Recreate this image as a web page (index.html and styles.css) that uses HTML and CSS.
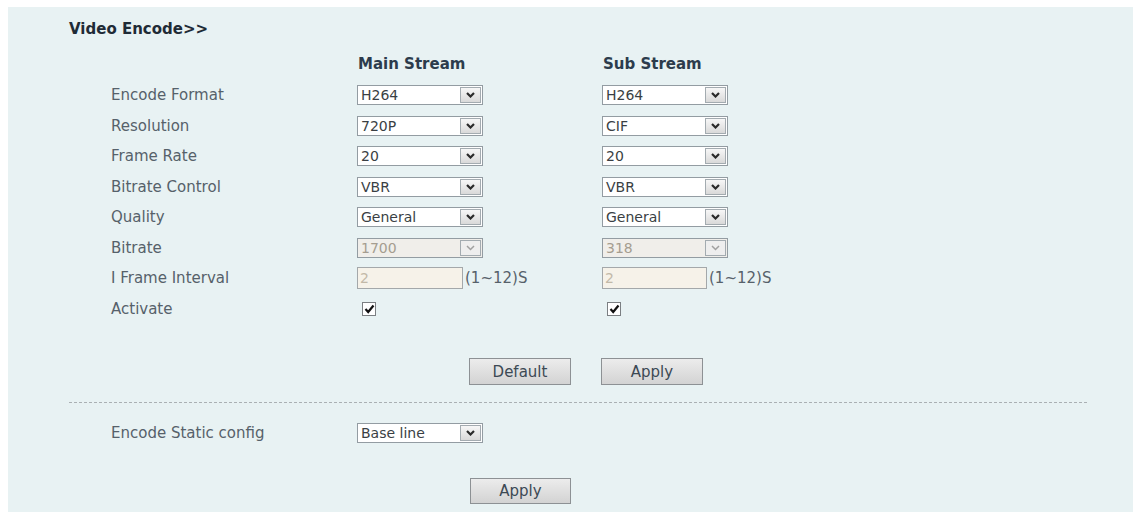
FILE: index.html
```html
<!DOCTYPE html>
<html lang="en">
<head>
  <meta charset="UTF-8" />
  <title>Video Encode</title>
  <link rel="stylesheet" href="styles.css">
</head>
<body>

<!-- Video encode settings panel -->
<div class="panel">
  <div class="title">Video Encode&gt;&gt;</div>

  <div class="form">
    <div></div>
    <div class="head">Main Stream</div>
    <div class="head">Sub Stream</div>

    <div class="label">Encode Format</div>
    <div><div class="select"><span class="val">H264</span><span class="arrow"><svg width="9" height="6" viewBox="0 0 9 6"><path d="M1 1 L4.5 4.5 L8 1" /></svg></span></div></div>
    <div><div class="select"><span class="val">H264</span><span class="arrow"><svg width="9" height="6" viewBox="0 0 9 6"><path d="M1 1 L4.5 4.5 L8 1" /></svg></span></div></div>

    <div class="label">Resolution</div>
    <div><div class="select"><span class="val">720P</span><span class="arrow"><svg width="9" height="6" viewBox="0 0 9 6"><path d="M1 1 L4.5 4.5 L8 1" /></svg></span></div></div>
    <div><div class="select"><span class="val">CIF</span><span class="arrow"><svg width="9" height="6" viewBox="0 0 9 6"><path d="M1 1 L4.5 4.5 L8 1" /></svg></span></div></div>

    <div class="label">Frame Rate</div>
    <div><div class="select"><span class="val">20</span><span class="arrow"><svg width="9" height="6" viewBox="0 0 9 6"><path d="M1 1 L4.5 4.5 L8 1" /></svg></span></div></div>
    <div><div class="select"><span class="val">20</span><span class="arrow"><svg width="9" height="6" viewBox="0 0 9 6"><path d="M1 1 L4.5 4.5 L8 1" /></svg></span></div></div>

    <div class="label">Bitrate Control</div>
    <div><div class="select"><span class="val">VBR</span><span class="arrow"><svg width="9" height="6" viewBox="0 0 9 6"><path d="M1 1 L4.5 4.5 L8 1" /></svg></span></div></div>
    <div><div class="select"><span class="val">VBR</span><span class="arrow"><svg width="9" height="6" viewBox="0 0 9 6"><path d="M1 1 L4.5 4.5 L8 1" /></svg></span></div></div>

    <div class="label">Quality</div>
    <div><div class="select"><span class="val">General</span><span class="arrow"><svg width="9" height="6" viewBox="0 0 9 6"><path d="M1 1 L4.5 4.5 L8 1" /></svg></span></div></div>
    <div><div class="select"><span class="val">General</span><span class="arrow"><svg width="9" height="6" viewBox="0 0 9 6"><path d="M1 1 L4.5 4.5 L8 1" /></svg></span></div></div>

    <div class="label">Bitrate</div>
    <div><div class="select disabled"><span class="val">1700</span><span class="arrow"><svg width="9" height="6" viewBox="0 0 9 6"><path d="M1 1 L4.5 4.5 L8 1" /></svg></span></div></div>
    <div><div class="select disabled"><span class="val">318</span><span class="arrow"><svg width="9" height="6" viewBox="0 0 9 6"><path d="M1 1 L4.5 4.5 L8 1" /></svg></span></div></div>

    <div class="label">I Frame Interval</div>
    <div class="inline"><span class="input main">2</span><span class="unit">(1~12)S</span></div>
    <div class="inline"><span class="input sub">2</span><span class="unit">(1~12)S</span></div>

    <div class="label">Activate</div>
    <div><span class="check"><svg width="11" height="10" viewBox="0 0 11 10"><path d="M1.5 5 L4.2 8 L9.5 1.5" /></svg></span></div>
    <div><span class="check"><svg width="11" height="10" viewBox="0 0 11 10"><path d="M1.5 5 L4.2 8 L9.5 1.5" /></svg></span></div>
  </div>

  <div class="actions">
    <button class="btn">Default</button>
    <button class="btn">Apply</button>
  </div>

  <div class="divider"></div>

  <div class="form static">
    <div class="label">Encode Static config</div>
    <div><div class="select"><span class="val">Base line</span><span class="arrow"><svg width="9" height="6" viewBox="0 0 9 6"><path d="M1 1 L4.5 4.5 L8 1" /></svg></span></div></div>
  </div>

  <div class="actions bottom">
    <button class="btn">Apply</button>
  </div>
</div>

</body>
</html>
```

FILE: styles.css
```css
* {
  margin: 0;
  padding: 0;
  box-sizing: border-box;
}
body, html {
  height: 100%;
  background: #fff;
  font-family: 'DejaVu Sans', Verdana, sans-serif;
  font-size: 15px;
  color: #56616a;
  overflow: hidden;
}

.panel {
  margin: 7px 0 0 8px;
  width: 1125px;
  height: 510px;
  background-color: #e8f2f3;
  padding-top: 12px;
}

.title {
  padding-left: 61px;
  line-height: 20px;
  font-weight: bold;
  color: #1f2b36;
}

/* label | main stream | sub stream */
.form {
  display: grid;
  grid-template-columns: 246px 245px 1fr;
  grid-template-rows: 32px repeat(8, 30.5px);
  align-items: center;
  margin: 9px 0 0 103px;
}

.head {
  font-weight: bold;
  color: #2c3c4c;
  padding-left: 1px;
}

.label {
  line-height: 20px;
}

.select {
  display: flex;
  width: 126px;
  height: 20px;
  background: #fff;
  border: 1px solid #939ca2;
  font-size: 14px;
  color: #3a3f44;
}
.select .val {
  flex: 1;
  padding-left: 3px;
  line-height: 18px;
}
.select .arrow {
  width: 21px;
  margin: 1px;
  border: 1px solid #a3abb0;
  background: linear-gradient(#f7f7f7, #d9d9d9);
  display: flex;
  align-items: center;
  justify-content: center;
}
.select .arrow path {
  fill: none;
  stroke: #2a2a2a;
  stroke-width: 2.2;
}

.select.disabled {
  background: #f0eeea;
  color: #a59d90;
}
.select.disabled .arrow {
  background: #eeeeee;
}
.select.disabled .arrow path {
  stroke: #a0a0a0;
  stroke-width: 1.5;
}

.inline {
  display: flex;
  align-items: center;
}
.input {
  height: 22px;
  background: #f6f2e9;
  border: 1px solid #a4a8aa;
  color: #c2b9a8;
  font-size: 14px;
  line-height: 20px;
  padding-left: 2px;
}
.input.main { width: 106px; }
.input.sub { width: 105px; }
.unit {
  padding-left: 2px;
}

.check {
  display: flex;
  align-items: center;
  justify-content: center;
  width: 14px;
  height: 14px;
  margin-left: 5px;
  background: #fff;
  border: 1px solid #7b7f82;
}
.check path {
  fill: none;
  stroke: #111;
  stroke-width: 2.2;
}

.actions {
  display: flex;
  gap: 30px;
  margin: 34px 0 0 461px;
}
.btn {
  width: 102px;
  height: 27px;
  font-family: 'DejaVu Sans', Verdana, sans-serif;
  font-size: 15px;
  color: #3c4954;
  background: linear-gradient(#ececec, #d3d3d3);
  border: 1px solid #8d9194;
}

.divider {
  margin: 17px 46px 0 61px;
  border-top: 1px dashed #aab0b3;
}

.form.static {
  grid-template-rows: 20px;
  margin-top: 20px;
}

.actions.bottom {
  margin-top: 35px;
  margin-left: 462px;
}
.actions.bottom .btn {
  width: 101px;
  height: 26px;
}
```
